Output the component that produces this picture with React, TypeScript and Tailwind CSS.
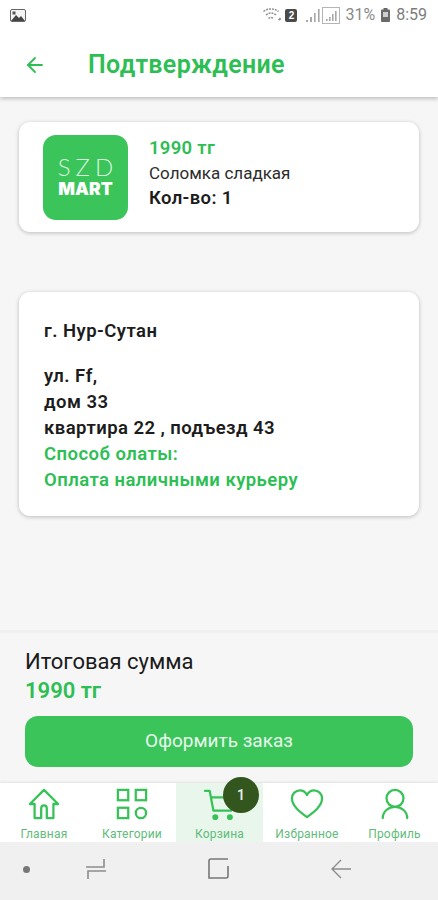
import { ArrowLeft } from 'lucide-react'

const GREEN = 'text-[#2dbe54]'

function StatusBar() {
  return (
    <div className="flex h-[30px] items-center justify-between pl-[10px] pr-[11px] text-[#7a7a7a]">
      <svg width="16" height="13" viewBox="0 0 16 13">
        <rect x="0.5" y="0.5" width="15" height="12" rx="1.5" fill="#f4f4f4" stroke="#666" />
        <path d="M1 12 L6 6 L9 9 L11 7 L15 12 Z" fill="#444" />
        <rect x="2.5" y="2.5" width="3" height="3" fill="#555" />
      </svg>
      <div className="flex items-center">
        {/* wifi */}
        <svg width="18" height="14" viewBox="0 0 18 14" fill="none" stroke="#8f8f8f" strokeWidth="1.5" strokeDasharray="2 1">
          <path d="M0.5 3.5 C5 0 11 0 15.5 3.5" />
          <path d="M3 7 C6.5 4.2 9.5 4.2 13 7" />
          <path d="M5.5 10.5 C7.5 9 8.5 9 10.5 10.5" />
          <circle cx="16.5" cy="11" r="0.7" fill="#777" />
        </svg>
        <span className="ml-[4px] flex h-[13px] w-[12px] items-center justify-center rounded-[2px] bg-[#4a4a4a] font-['Liberation_Sans',sans-serif] text-[10px] font-bold text-white">
          2
        </span>
        {/* sim 1 signal */}
        <svg className="ml-[9px]" width="14" height="15" viewBox="0 0 14 15" fill="#a8a8a8">
          <rect x="0" y="12" width="2" height="2" />
          <rect x="4" y="9" width="2" height="5" />
          <rect x="8" y="5" width="1.6" height="9" />
          <rect x="12" y="1" width="1.6" height="13" />
        </svg>
        {/* sim 2 signal, boxed */}
        <svg className="ml-[2px]" width="18" height="17" viewBox="0 0 18 17" fill="#a8a8a8">
          <rect x="0.5" y="0.5" width="17" height="16" fill="none" stroke="#b5b5b5" />
          <rect x="4" y="12" width="1.6" height="2" />
          <rect x="7" y="10" width="1.6" height="4" />
          <rect x="10" y="7" width="1.6" height="7" />
          <rect x="13" y="4" width="1.6" height="10" />
        </svg>
        <span className="ml-[5px] font-['Roboto',sans-serif] text-[16px] leading-none text-[#8a8a8a]">31%</span>
        <svg className="ml-[6px]" width="9" height="14" viewBox="0 0 9 14">
          <rect x="2.5" y="0" width="4" height="2" fill="#666" />
          <rect x="0" y="1.5" width="9" height="12.5" rx="1" fill="#6a6a6a" />
          <rect x="2" y="4" width="5" height="5" fill="#cfcfcf" />
        </svg>
        <span className="ml-[6px] font-['Roboto',sans-serif] text-[16px] leading-none text-[#7c7c7c]">8:59</span>
      </div>
    </div>
  )
}

function Header() {
  return (
    <div className="relative z-10 bg-white shadow-[0_2px_4px_rgba(0,0,0,0.22)]">
      <StatusBar />
      <div className="flex h-[67px] items-center pl-[23px] pt-[3px]">
        <ArrowLeft className={GREEN} size={24} strokeWidth={1.8} />
        <h1 className={`ml-[41px] text-[25px] font-semibold tracking-[0.35px] ${GREEN}`}>Подтверждение</h1>
      </div>
    </div>
  )
}

function Logo() {
  return (
    <div className="flex h-[85px] w-[85px] shrink-0 flex-col items-center justify-center rounded-[13px] bg-[#3ac45a] text-white">
      <div className="pl-[5px] font-['Lato',sans-serif] text-[24px] font-light leading-[24px] tracking-[5px] text-[#d8f5df]">SZD</div>
      <div className="font-['Inter',sans-serif] text-[17.5px] font-black leading-[20px]">MART</div>
    </div>
  )
}

function ProductCard() {
  return (
    <div className="flex h-[110px] items-center rounded-[11px] bg-white pl-[24px] shadow-[0_1px_4px_rgba(0,0,0,0.24)]">
      <Logo />
      <div className="mb-[7px] ml-[21px]">
        <div className={`text-[18.5px] font-semibold leading-[25px] tracking-[0.3px] ${GREEN}`}>1990 тг</div>
        <div className="text-[17px] leading-[25px] text-[#2c2c2c]">Соломка сладкая</div>
        <div className="text-[18.5px] font-semibold leading-[25px] tracking-[0.35px] text-[#1c1c1c]">Кол-во: 1</div>
      </div>
    </div>
  )
}

function AddressCard() {
  return (
    <div className="mt-[60px] h-[224px] rounded-[11px] bg-white pl-[25px] pt-[26px] text-[18.5px] font-semibold leading-[26px] tracking-[0.45px] text-[#1c1c1c] shadow-[0_1px_4px_rgba(0,0,0,0.24)]">
      <div>г. Нур-Сутан</div>
      <div className="mt-[19px]">ул. Ff,</div>
      <div>дом 33</div>
      <div>квартира 22 , подъезд 43</div>
      <div className={GREEN}>Способ олаты:</div>
      <div className={GREEN}>Оплата наличными курьеру</div>
    </div>
  )
}

function Summary() {
  return (
    <div className="border-t-[3px] border-[#f0f0f0] px-[25px] pb-[16px] pt-[14px]">
      <div className="text-[22px] leading-[30px] text-[#1a1a1a]">Итоговая сумма</div>
      <div className={`text-[22px] font-semibold leading-[28px] ${GREEN}`}>1990 тг</div>
      <button className="mt-[11px] flex h-[51px] w-full items-center justify-center rounded-[13px] bg-[#3ac45a] text-[19px] text-[#e8f8ec]">
        Оформить заказ
      </button>
    </div>
  )
}

const iconProps = {
  fill: 'none',
  stroke: '#36c257',
  strokeWidth: 2.4,
  strokeLinecap: 'round' as const,
  strokeLinejoin: 'round' as const,
}

const tabs = [
  {
    label: 'Главная',
    icon: (
      <svg width="32" height="32" viewBox="0 0 34 34" {...iconProps}>
        <path d="M17 2 L32 17 H27 V32 H20 V22 Q20 18.5 17 18.5 Q14 18.5 14 22 V32 H7 V17 H2 Z" />
      </svg>
    ),
  },
  {
    label: 'Категории',
    icon: (
      <svg width="32" height="32" viewBox="0 0 34 34" {...iconProps} strokeLinejoin="miter">
        <rect x="2" y="2" width="11" height="11" />
        <rect x="21" y="2" width="11" height="11" />
        <rect x="2" y="21" width="11" height="11" />
        <circle cx="26.5" cy="26.5" r="5.5" />
      </svg>
    ),
  },
  {
    label: 'Корзина',
    active: true,
    icon: (
      <svg width="32" height="32" viewBox="0 0 34 34" {...iconProps}>
        <path d="M1 3 H6 L10 24 H29 L32 10 H7.5" />
        <circle cx="12" cy="31" r="2" fill="#36c257" />
        <circle cx="27.5" cy="31" r="2" fill="#36c257" />
      </svg>
    ),
  },
  {
    label: 'Избранное',
    icon: (
      <svg width="36" height="32" viewBox="0 0 36 34" {...iconProps}>
        <path d="M18 31 C10 25 2 19 2 11 C2 6 6 2.5 10.5 2.5 C14 2.5 16.5 4.5 18 7.5 C19.5 4.5 22 2.5 25.5 2.5 C30 2.5 34 6 34 11 C34 19 26 25 18 31 Z" />
      </svg>
    ),
  },
  {
    label: 'Профиль',
    icon: (
      <svg width="30" height="32" viewBox="0 0 30 34" {...iconProps}>
        <circle cx="15" cy="11" r="9" />
        <path d="M2 32 C2 25 8 20 15 20 C22 20 28 25 28 32" />
      </svg>
    ),
  },
]

function BottomNav() {
  return (
    <div className="grid h-[59px] grid-cols-[88px_88px_87px_88px_87px] bg-white shadow-[0_-1px_2px_rgba(0,0,0,0.08)]">
      {tabs.map((tab) => (
        <div
          key={tab.label}
          className={`relative flex flex-col items-center pt-[5px] ${tab.active ? 'bg-[#e9f6ec]' : ''}`}
        >
          {tab.icon}
          <span className="mt-[7px] whitespace-nowrap text-[12px] leading-[14px] tracking-[0.2px] text-[#62bb7a]">{tab.label}</span>
          {tab.active && (
            <span className="absolute left-[47px] top-[-6px] flex h-[36px] w-[36px] items-center justify-center rounded-full bg-[#33561f] text-[14px] font-semibold text-[#e8e8e8]">
              1
            </span>
          )}
        </div>
      ))}
    </div>
  )
}

function SystemBar() {
  return (
    <div className="flex h-[58px] items-center bg-[#f0f0f0] pb-[4px]">
      <span className="ml-[23px] h-[7px] w-[7px] rounded-full bg-[#777]" />
      <svg className="ml-[56px]" width="20" height="22" viewBox="0 0 20 22" fill="none" stroke="#8c8c8c" strokeWidth="1.6">
        <path d="M0 9 H18 V1" />
        <path d="M20 13 H2 V21" />
      </svg>
      <svg className="ml-[102px]" width="21" height="22" viewBox="0 0 21 22" fill="none" stroke="#777" strokeWidth="1.6">
        <path d="M20 1 H3 Q1 1 1 3 V20 H18 Q20 20 20 18 V8" />
      </svg>
      <svg className="ml-[102px]" width="21" height="20" viewBox="0 0 21 20" fill="none" stroke="#8c8c8c" strokeWidth="1.4">
        <path d="M20 10 H2 M10 1 L1 10 L10 19" />
      </svg>
    </div>
  )
}

export default function App() {
  return (
    <div className="flex h-[900px] w-[438px] flex-col overflow-hidden bg-[#f6f6f6] font-['Roboto','Noto_Sans',sans-serif]">
      <Header />
      <main className="flex-1 px-[19px] pt-[25px]">
        <ProductCard />
        <AddressCard />
      </main>
      <Summary />
      <BottomNav />
      <SystemBar />
    </div>
  )
}
